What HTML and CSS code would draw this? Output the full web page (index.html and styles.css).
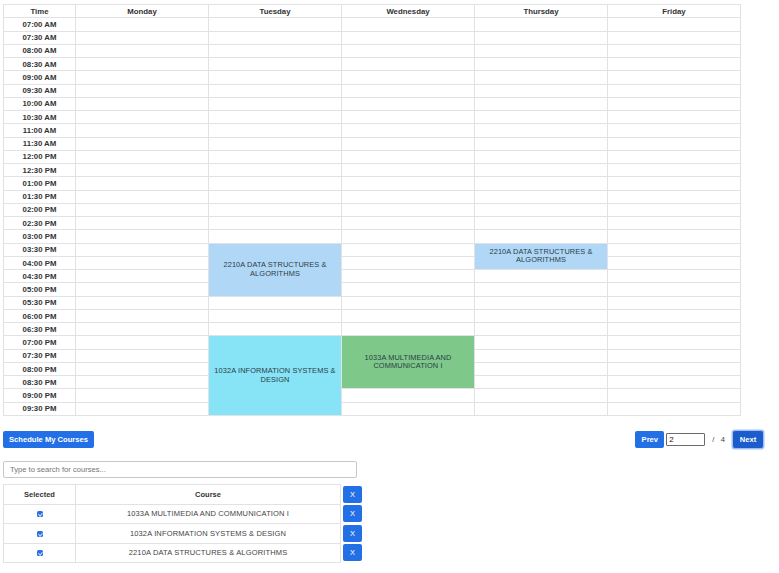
FILE: index.html
```html
<!DOCTYPE html>
<html>
<head>
<meta charset="utf-8">
<link rel="stylesheet" href="styles.css">
</head>
<body>
<div class="page">
  <div class="schedule">
    <div class="ev ev-blue ev-tue1">2210A DATA STRUCTURES &amp;<br>ALGORITHMS</div>
    <div class="ev ev-blue ev-thu1">2210A DATA STRUCTURES &amp;<br>ALGORITHMS</div>
    <div class="ev ev-cyan ev-tue2">1032A INFORMATION SYSTEMS &amp;<br>DESIGN</div>
    <div class="ev ev-green ev-wed1">1033A MULTIMEDIA AND<br>COMMUNICATION I</div>

    <div class="c hd">Time</div><div class="c hd">Monday</div><div class="c hd">Tuesday</div><div class="c hd">Wednesday</div><div class="c hd">Thursday</div><div class="c hd">Friday</div>

    <div class="c tm">07:00 AM</div><div class="c"></div><div class="c"></div><div class="c"></div><div class="c"></div><div class="c"></div>
    <div class="c tm">07:30 AM</div><div class="c"></div><div class="c"></div><div class="c"></div><div class="c"></div><div class="c"></div>
    <div class="c tm">08:00 AM</div><div class="c"></div><div class="c"></div><div class="c"></div><div class="c"></div><div class="c"></div>
    <div class="c tm">08:30 AM</div><div class="c"></div><div class="c"></div><div class="c"></div><div class="c"></div><div class="c"></div>
    <div class="c tm">09:00 AM</div><div class="c"></div><div class="c"></div><div class="c"></div><div class="c"></div><div class="c"></div>
    <div class="c tm">09:30 AM</div><div class="c"></div><div class="c"></div><div class="c"></div><div class="c"></div><div class="c"></div>
    <div class="c tm">10:00 AM</div><div class="c"></div><div class="c"></div><div class="c"></div><div class="c"></div><div class="c"></div>
    <div class="c tm">10:30 AM</div><div class="c"></div><div class="c"></div><div class="c"></div><div class="c"></div><div class="c"></div>
    <div class="c tm">11:00 AM</div><div class="c"></div><div class="c"></div><div class="c"></div><div class="c"></div><div class="c"></div>
    <div class="c tm">11:30 AM</div><div class="c"></div><div class="c"></div><div class="c"></div><div class="c"></div><div class="c"></div>
    <div class="c tm">12:00 PM</div><div class="c"></div><div class="c"></div><div class="c"></div><div class="c"></div><div class="c"></div>
    <div class="c tm">12:30 PM</div><div class="c"></div><div class="c"></div><div class="c"></div><div class="c"></div><div class="c"></div>
    <div class="c tm">01:00 PM</div><div class="c"></div><div class="c"></div><div class="c"></div><div class="c"></div><div class="c"></div>
    <div class="c tm">01:30 PM</div><div class="c"></div><div class="c"></div><div class="c"></div><div class="c"></div><div class="c"></div>
    <div class="c tm">02:00 PM</div><div class="c"></div><div class="c"></div><div class="c"></div><div class="c"></div><div class="c"></div>
    <div class="c tm">02:30 PM</div><div class="c"></div><div class="c"></div><div class="c"></div><div class="c"></div><div class="c"></div>
    <div class="c tm">03:00 PM</div><div class="c"></div><div class="c"></div><div class="c"></div><div class="c"></div><div class="c"></div>
    <div class="c tm">03:30 PM</div><div class="c"></div><div class="c"></div><div class="c"></div>
    <div class="c tm">04:00 PM</div><div class="c"></div><div class="c"></div><div class="c"></div>
    <div class="c tm">04:30 PM</div><div class="c"></div><div class="c"></div><div class="c"></div><div class="c"></div>
    <div class="c tm">05:00 PM</div><div class="c"></div><div class="c"></div><div class="c"></div><div class="c"></div>
    <div class="c tm">05:30 PM</div><div class="c"></div><div class="c"></div><div class="c"></div><div class="c"></div><div class="c"></div>
    <div class="c tm">06:00 PM</div><div class="c"></div><div class="c"></div><div class="c"></div><div class="c"></div><div class="c"></div>
    <div class="c tm">06:30 PM</div><div class="c"></div><div class="c"></div><div class="c"></div><div class="c"></div><div class="c"></div>
    <div class="c tm">07:00 PM</div><div class="c"></div><div class="c"></div><div class="c"></div>
    <div class="c tm">07:30 PM</div><div class="c"></div><div class="c"></div><div class="c"></div>
    <div class="c tm">08:00 PM</div><div class="c"></div><div class="c"></div><div class="c"></div>
    <div class="c tm">08:30 PM</div><div class="c"></div><div class="c"></div><div class="c"></div>
    <div class="c tm">09:00 PM</div><div class="c"></div><div class="c"></div><div class="c"></div><div class="c"></div>
    <div class="c tm">09:30 PM</div><div class="c"></div><div class="c"></div><div class="c"></div><div class="c"></div>
  </div>

  <div class="controls">
    <button class="btn btn-schedule">Schedule My Courses</button>
    <div class="pager">
      <button class="btn btn-prev">Prev</button>
      <input class="page-input" type="text" value="2">
      <span class="page-total">/&nbsp;&nbsp;&nbsp;4</span>
      <button class="btn btn-next">Next</button>
    </div>
  </div>

  <input class="search" type="text" placeholder="Type to search for courses...">

  <table class="courses">
    <tr>
      <th class="col-sel">Selected</th>
      <th class="col-course">Course</th>
      <td class="col-x"><button class="btn-x">X</button></td>
    </tr>
    <tr>
      <td class="col-sel"><span class="check"></span></td>
      <td class="col-course">1033A MULTIMEDIA AND COMMUNICATION I</td>
      <td class="col-x"><button class="btn-x">X</button></td>
    </tr>
    <tr>
      <td class="col-sel"><span class="check"></span></td>
      <td class="col-course">1032A INFORMATION SYSTEMS &amp; DESIGN</td>
      <td class="col-x"><button class="btn-x">X</button></td>
    </tr>
    <tr>
      <td class="col-sel"><span class="check"></span></td>
      <td class="col-course">2210A DATA STRUCTURES &amp; ALGORITHMS</td>
      <td class="col-x"><button class="btn-x">X</button></td>
    </tr>
  </table>
</div>
</body>
</html>
```

FILE: styles.css
```css
* { box-sizing: border-box; }

body {
  margin: 0;
  font-family: "Liberation Sans", Arial, sans-serif;
  color: #333;
  background: #fff;
}

.page {
  width: 763px;
  padding: 4px 0 0 3px;
}

.schedule {
  display: grid;
  grid-template-columns: 71px repeat(5, 132px);
  grid-template-rows: repeat(31, 1fr);
  gap: 1px;
  padding: 1px;
  width: 738px;
  height: 412px;
  background: #e2e2e6;
}

.c {
  background: #fff;
  display: flex;
  align-items: center;
  justify-content: center;
  font-size: 7.8px;
  font-weight: bold;
  color: #333;
}

.ev {
  display: flex;
  align-items: center;
  justify-content: center;
  text-align: center;
  font-size: 7.4px;
  line-height: 8.6px;
  color: #2d3b48;
  letter-spacing: 0.1px;
  padding: 0 4px;
}

.ev-blue { background: #b0d8f6; }
.ev-cyan { background: #86e4f6; }
.ev-green { background: #7ec98a; }

.ev-tue1 { grid-column: 3; grid-row: 19 / span 4; }
.ev-thu1 { grid-column: 5; grid-row: 19 / span 2; }
.ev-tue2 { grid-column: 3; grid-row: 26 / span 6; }
.ev-wed1 { grid-column: 4; grid-row: 26 / span 4; }

.controls {
  display: flex;
  justify-content: space-between;
  align-items: center;
  margin-top: 15px;
  width: 760px;
}

.btn {
  border: none;
  border-radius: 2px;
  background: #2370e6;
  color: #fff;
  font-family: "Liberation Sans", Arial, sans-serif;
  font-weight: bold;
  font-size: 7.6px;
  height: 17px;
  padding: 0 7px;
  cursor: pointer;
}

.btn-schedule { width: 91px; padding: 0; }

.pager {
  display: flex;
  align-items: center;
}

.btn-prev { width: 29px; padding: 0; }

.page-input {
  width: 39px;
  height: 13px;
  margin-left: 2px;
  border: 1px solid #6b6b6b;
  border-radius: 1px;
  padding: 0 2px;
  font-family: "Liberation Sans", Arial, sans-serif;
  font-size: 8px;
  color: #111;
}

.page-total {
  font-size: 7.6px;
  color: #444;
  margin-left: 7px;
  margin-right: 8px;
}

.btn-next {
  width: 30px;
  padding: 0;
  background: #1c5dcb;
  box-shadow: 0 0 0 1.5px #9fc0f3;
}

.search {
  display: block;
  margin-top: 13px;
  width: 354px;
  height: 17px;
  border: 1px solid #c8c8c8;
  border-radius: 2px;
  padding: 0 6px;
  font-family: "Liberation Sans", Arial, sans-serif;
  font-size: 7.6px;
  color: #333;
}
.search::placeholder { color: #757575; }

.courses {
  margin-top: 6px;
  border-collapse: collapse;
  font-size: 7.5px;
}

.courses th,
.courses td {
  height: 19.5px;
  padding: 0;
  text-align: center;
  vertical-align: middle;
}

.courses .col-sel,
.courses .col-course {
  border: 1px solid #e2e2e6;
}

.courses th { font-weight: bold; color: #333; }
.courses td.col-course { color: #444; letter-spacing: 0.15px; }

.col-sel { width: 72px; }
.col-course { width: 265px; }
.col-x { width: 22px; padding-left: 2px !important; text-align: left !important; }

.btn-x {
  display: block;
  width: 19px;
  height: 17px;
  border: none;
  border-radius: 2px;
  background: #2370e6;
  color: #fff;
  font-family: "Liberation Sans", Arial, sans-serif;
  font-size: 7.5px;
  padding: 0;
}

.check {
  display: inline-block;
  width: 6px;
  height: 6px;
  border-radius: 1.5px;
  background: #2a6fe0;
  vertical-align: middle;
  position: relative;
}
.check::after {
  content: "";
  position: absolute;
  left: 2px;
  top: 1px;
  width: 1.5px;
  height: 3px;
  border-right: 1px solid #cfe0fb;
  border-bottom: 1px solid #cfe0fb;
  transform: rotate(45deg);
}
```
